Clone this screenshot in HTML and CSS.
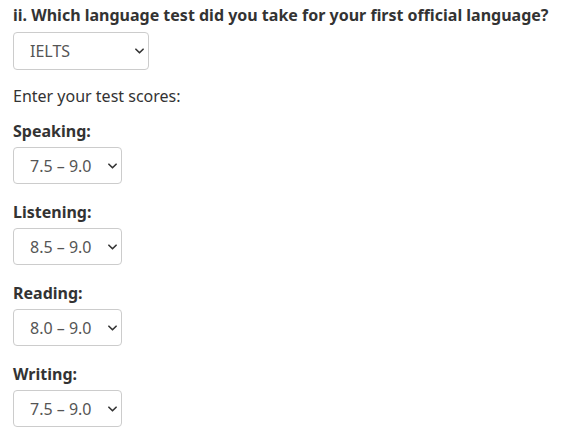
FILE: index.html
```html
<!DOCTYPE html>
<html lang="en">
<head>
<meta charset="utf-8">
<link rel="stylesheet" href="styles.css">
</head>
<body>
<div class="page">
  <h3 class="question">ii. Which language test did you take for your first official language?</h3>
  <div class="select-wrap select-test">
    <select class="select"><option>IELTS</option></select>
    <svg class="chev" viewBox="0 0 10 6" width="9" height="6"><path d="M1 1l4 4 4-4" fill="none" stroke="#333" stroke-width="1.8" stroke-linecap="round" stroke-linejoin="round"/></svg>
  </div>
  <p class="intro">Enter your test scores:</p>
  <div class="score">
    <label class="score-label">Speaking:</label>
    <div class="select-wrap select-score">
      <select class="select"><option>7.5 – 9.0</option></select>
      <svg class="chev" viewBox="0 0 10 6" width="9" height="6"><path d="M1 1l4 4 4-4" fill="none" stroke="#333" stroke-width="1.8" stroke-linecap="round" stroke-linejoin="round"/></svg>
    </div>
  </div>
  <div class="score">
    <label class="score-label">Listening:</label>
    <div class="select-wrap select-score">
      <select class="select"><option>8.5 – 9.0</option></select>
      <svg class="chev" viewBox="0 0 10 6" width="9" height="6"><path d="M1 1l4 4 4-4" fill="none" stroke="#333" stroke-width="1.8" stroke-linecap="round" stroke-linejoin="round"/></svg>
    </div>
  </div>
  <div class="score">
    <label class="score-label">Reading:</label>
    <div class="select-wrap select-score">
      <select class="select"><option>8.0 – 9.0</option></select>
      <svg class="chev" viewBox="0 0 10 6" width="9" height="6"><path d="M1 1l4 4 4-4" fill="none" stroke="#333" stroke-width="1.8" stroke-linecap="round" stroke-linejoin="round"/></svg>
    </div>
  </div>
  <div class="score">
    <label class="score-label">Writing:</label>
    <div class="select-wrap select-score">
      <select class="select"><option>7.5 – 9.0</option></select>
      <svg class="chev" viewBox="0 0 10 6" width="9" height="6"><path d="M1 1l4 4 4-4" fill="none" stroke="#333" stroke-width="1.8" stroke-linecap="round" stroke-linejoin="round"/></svg>
    </div>
  </div>
</div>
</body>
</html>
```
FILE: styles.css
```css
html, body {
  margin: 0;
  padding: 0;
  background: #fff;
}
body {
  font-family: "Noto Sans", "Open Sans", sans-serif;
  color: #333;
  font-size: 16px;
  line-height: 1.4;
}
.page {
  padding: 4px 13px 0 13px;
  display: flex;
  flex-direction: column;
  align-items: flex-start;
}
.question {
  margin: 0 0 5px 0;
  font-size: 16px;
  font-weight: 700;
  line-height: 23px;
}
.select-wrap {
  position: relative;
  display: block;
}
.select {
  appearance: none;
  -webkit-appearance: none;
  font-family: inherit;
  font-size: 16px;
  color: #555;
  background: #fff;
  border: 1px solid #ccc;
  border-radius: 4px;
  height: 37px;
  padding: 0 28px 0 16px;
  margin: 0;
  display: block;
}
.select-test .select { width: 136px; height: 38px; }
.select-score .select { width: 109px; }
.chev {
  position: absolute;
  top: 16px;
  pointer-events: none;
}
.select-test .chev { left: 122px; }
.select-score .chev { left: 95px; }
.intro {
  margin: 15px 0 0 0;
  line-height: 22px;
}
.score {
  display: flex;
  flex-direction: column;
  align-items: flex-start;
  gap: 5px;
  margin-top: 13px;
}
.score + .score { margin-top: 17px; }
.score-label {
  font-weight: 700;
  line-height: 22px;
}
```
